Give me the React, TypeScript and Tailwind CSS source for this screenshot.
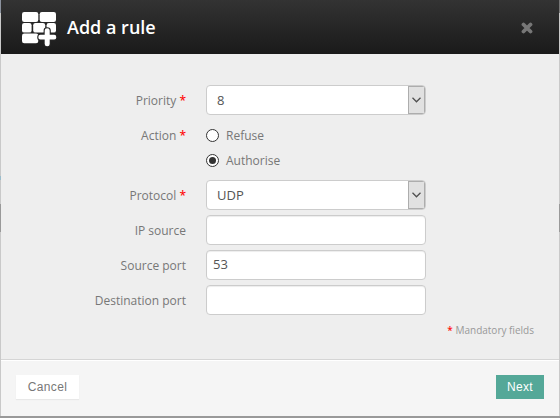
import React from "react";

function WallIcon() {
  return (
    <svg className="mt-[5px] h-[36px] w-[36px] shrink-0" viewBox="0 0 36 36" fill="#fff">
      <rect x="0" y="0" width="16.3" height="10" rx="2.2" />
      <rect x="17.7" y="0" width="16.3" height="10" rx="2.2" />
      <rect x="0" y="11" width="9.6" height="9.6" rx="2.2" />
      <rect x="11.2" y="11" width="12" height="9.6" rx="2.2" />
      <rect x="24.6" y="11" width="9.4" height="9.6" rx="2.2" />
      <rect x="0" y="21.6" width="16.3" height="9.6" rx="2.2" />
      <path
        d="M22.7 18.5Q22.7 16.3 25.2 16.3T27.7 18.5V22.8H32.2Q34.3 22.8 34.3 25.2T32.2 27.6H27.7V32Q27.7 34.2 25.2 34.2T22.7 32V27.6H18.4Q16.3 27.6 16.3 25.2T18.4 22.8H22.7Z"
        stroke="#252525"
        strokeWidth="2.2"
        paintOrder="stroke"
      />
    </svg>
  );
}

function Label({ text, required = false }: { text: string; required?: boolean }) {
  return (
    <span className="w-[185px] shrink-0 text-right whitespace-nowrap">
      {text}
      {required && <span className="font-semibold text-[#ff1010]"> *</span>}
    </span>
  );
}

function Select({ value }: { value: string }) {
  return (
    <div className="flex h-[30px] w-[220px] overflow-hidden rounded-[4px] border border-[#ccc] bg-white text-[#555]">
      <span className="flex-1 pl-[10px] text-[13px] leading-[28px]">{value}</span>
      <span className="flex w-[17px] items-center border border-[#adadad] bg-[#e1e1e1] pl-[3px]">
        <svg className="h-[6px] w-[9px]" viewBox="0 0 9 6" fill="none" stroke="#505050" strokeWidth="1.3">
          <path d="M.5.8 4.5 4.8 8.5.8" />
        </svg>
      </span>
    </div>
  );
}

function Field({ value = "" }: { value?: string }) {
  return (
    <div className="h-[30px] w-[220px] rounded-[4px] border border-[#ccc] bg-white pl-[6px] text-[13px] leading-[27px] text-[#555] shadow-[inset_0_1px_1px_rgba(0,0,0,0.075)]">
      {value}
    </div>
  );
}

function Row({ label, required, children }: { label: string; required?: boolean; children: React.ReactNode }) {
  return (
    <div className="flex gap-[20px] leading-[31px]">
      <Label text={label} required={required} />
      {children}
    </div>
  );
}

function Radio({ text, checked = false }: { text: string; checked?: boolean }) {
  return (
    <div className="flex items-center gap-[7px]">
      <span className="flex h-[13px] w-[13px] items-center justify-center rounded-full border border-[#333] bg-white">
        {checked && <span className="h-[7px] w-[7px] rounded-full bg-[#333]" />}
      </span>
      <span>{text}</span>
    </div>
  );
}

export default function App() {
  return (
    <div className="flex h-[418px] w-[560px] flex-col bg-[#999] font-['Open_Sans',sans-serif] text-[12px] text-[#777]">
      <div className="flex h-[416px]">
        <div className="flex w-px shrink-0 flex-col bg-[#c9c9c9]">
          <span className="h-[13px] bg-[#8b929e]" />
          <span className="mt-[163px] h-[4px] bg-[#9abccb]" />
          <span className="mt-[24px] h-[28px] bg-[#999]" />
        </div>
        <div className="flex flex-1 flex-col bg-[#eee]">
          <header className="flex h-[54px] items-center bg-linear-to-b from-[#333] to-[#1a1a1a] pl-[21px] pr-[26px] text-white">
            <WallIcon />
            <h1 className="ml-[9px] flex-1 text-[18px] font-semibold">Add a rule</h1>
            <svg className="mt-[2px] h-[12px] w-[12px]" viewBox="0 0 12 12" stroke="#777" strokeWidth="3.8" strokeLinecap="round">
              <path d="M2.5 2.5l7 7M9.5 2.5l-7 7" />
            </svg>
          </header>
          <main className="flex flex-1 flex-col pt-[31px]">
            <div className="flex flex-col gap-[7px]">
              <div className="h-[30px]">
                <Row label="Priority" required>
                  <Select value="8" />
                </Row>
              </div>
              <div className="flex h-[51px] gap-[20px] pt-px leading-[25px]">
                <Label text="Action" required />
                <div>
                  <Radio text="Refuse" />
                  <Radio text="Authorise" checked />
                </div>
              </div>
              <div className="flex flex-col gap-[4px]">
                <Row label="Protocol" required>
                  <Select value="UDP" />
                </Row>
                <Row label="IP source">
                  <Field />
                </Row>
                <Row label="Source port">
                  <Field value="53" />
                </Row>
                <Row label="Destination port">
                  <Field />
                </Row>
              </div>
            </div>
            <p className="mt-[6px] pr-[25px] text-right text-[10px] leading-[16px] text-[#999]">
              <span className="font-semibold text-[#ff1010]">*</span> Mandatory fields
            </p>
          </main>
          <footer className="flex h-[57px] items-start justify-between border-t border-[#d5d5d5] bg-[#f5f5f5] px-[15px] pt-[15px] font-['Liberation_Sans',sans-serif] shadow-[inset_0_1px_0_#fff]">
            <button className="h-[24px] w-[63px] bg-white text-[12px] tracking-[0.35px] shadow-[0_1px_1px_rgba(0,0,0,0.05)]">Cancel</button>
            <button className="h-[24px] w-[48px] bg-[#54a898] text-[12px] tracking-[0.3px] text-white">Next</button>
          </footer>
        </div>
        <div className="flex w-px shrink-0 flex-col bg-[#c9c9c9]">
          <span className="h-[13px] bg-[#777]" />
          <span className="mt-[191px] h-[28px] bg-[#999]" />
        </div>
      </div>
    </div>
  );
}
